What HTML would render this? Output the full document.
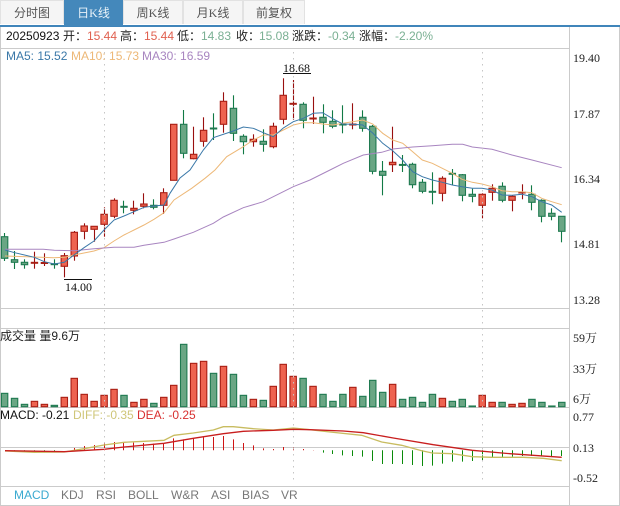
<!DOCTYPE html>
<html>
<head>
<meta charset="utf-8">
<style>
html,body{margin:0;padding:0;background:#fff}
#r{position:relative;width:620px;height:506px;overflow:hidden;font-family:"Liberation Sans","Noto Sans CJK SC",sans-serif;font-size:12px;background:#fff}
#r span,#r div.t{position:absolute;white-space:nowrap;line-height:14px}
.tab{position:absolute;top:0;height:24px;box-sizing:border-box;background:#f5f5f5;border:1px solid #e2e2e2;border-bottom:0;text-align:center;line-height:25px;font-size:12px;color:#555;font-family:"Liberation Serif","Noto Sans CJK SC",sans-serif}
.s{font-family:"Liberation Serif","Noto Serif CJK SC",serif;color:#222}
svg{position:absolute;left:0;top:0}
.g{color:#7ab093}.d{color:#e0604f}
</style>
</head>
<body>
<div id="r">
<svg id="c" width="620" height="506" viewBox="0 0 620 506">
<rect x="0" y="25" width="620" height="2" fill="#4085ba"/>
<g fill="none" stroke="#cbcbcb" stroke-width="1">
<path d="M.5 27V505.5H619.5V27M569.5 27V505.5M1 48.500H569M1 308.500H569M1 328.500H569M1 407.500H569M1 447.500H569M1 486.500H569"/>
</g>
<g id="k"></g>
<path d="M104.500 52V484M293.500 52V484M482.500 52V484" stroke="#c6c6c6" stroke-width="1" stroke-dasharray="1.500 4.500" fill="none"/>
<path d="M283 73.500H311M64 279.500H92" stroke="#111" stroke-width="1"/>
</svg>

<div class="tab" style="left:0;width:64px">分时图</div>
<div class="tab" style="left:64px;width:59px;height:26px;background:#4488bb;border-color:#4488bb;color:#e8f2f8">日K线</div>
<div class="tab" style="left:123px;width:60px">周K线</div>
<div class="tab" style="left:183px;width:60px">月K线</div>
<div class="tab" style="left:243px;width:62px">前复权</div>

<span style="left:6px;top:29px;color:#111">20250923</span>
<span style="left:63px;top:29px;color:#222">开：</span><span class="d" style="left:87px;top:29px">15.44</span>
<span style="left:120px;top:29px;color:#222">高：</span><span class="d" style="left:144px;top:29px">15.44</span>
<span style="left:177px;top:29px;color:#222">低：</span><span class="g" style="left:201px;top:29px">14.83</span>
<span style="left:236px;top:29px;color:#222">收：</span><span class="g" style="left:259px;top:29px">15.08</span>
<span style="left:292px;top:29px;color:#222">涨跌：</span><span class="g" style="left:328px;top:29px">-0.34</span>
<span style="left:359px;top:29px;color:#222">涨幅：</span><span class="g" style="left:395px;top:29px">-2.20%</span>

<span style="left:6px;top:49px;color:#3a78a8">MA5: 15.52</span>
<span style="left:71px;top:49px;color:#edb877">MA10: 15.73</span>
<span style="left:142px;top:49px;color:#a885c0">MA30: 16.59</span>

<span class="s" style="left:283px;top:61px;color:#111">18.68</span>
<span class="s" style="left:65px;top:280px;color:#111">14.00</span>

<span class="s" style="left:573px;top:51px">19.40</span>
<span class="s" style="left:573px;top:107px">17.87</span>
<span class="s" style="left:573px;top:172px">16.34</span>
<span class="s" style="left:573px;top:237px">14.81</span>
<span class="s" style="left:573px;top:293px">13.28</span>
<span class="s" style="left:573px;top:331px">59万</span>
<span class="s" style="left:573px;top:362px">33万</span>
<span class="s" style="left:573px;top:392px">6万</span>
<span class="s" style="left:573px;top:410px">0.77</span>
<span class="s" style="left:573px;top:441px">0.13</span>
<span class="s" style="left:573px;top:471px">-0.52</span>

<span style="left:0;top:329px;color:#222">成交量 量9.6万</span>
<span style="left:0;top:408px;color:#111">MACD: -0.21</span>
<span style="left:73px;top:408px;color:#cfc678">DIFF: -0.35</span>
<span style="left:137px;top:408px;color:#d83030">DEA: -0.25</span>

<span style="left:14px;top:488px;color:#3aa9d0">MACD</span>
<span style="left:61px;top:488px;color:#777">KDJ</span>
<span style="left:96px;top:488px;color:#777">RSI</span>
<span style="left:128px;top:488px;color:#777">BOLL</span>
<span style="left:171px;top:488px;color:#777">W&amp;R</span>
<span style="left:211px;top:488px;color:#777">ASI</span>
<span style="left:242px;top:488px;color:#777">BIAS</span>
<span style="left:281px;top:488px;color:#777">VR</span>
</div>
<script>
(function(){
var C=[
['g',236.7,258.3,233,261],['g',259.7,262.3,251,269],['g',262.3,264.7,259.3,268.7],['r',262.3,263.7,251.7,268.7],['r',262.5,263,253.3,266],
['g',263.7,264.7,259.3,268.7],['r',255.7,266.3,253,277.3],['r',232.3,256,231,260.7],['r',226,231.3,223.3,239.3],['r',226.3,229.3,226,241.7],
['r',214.3,224.3,207.3,236.7],['r',200.3,216.3,198.3,218.3],['g',206.3,207.7,200.7,213.3],['r',208.3,210.3,200.7,214.3],['r',204,206.3,193.3,208.3],
['g',205.3,207.3,199.3,209.3],['r',192.7,205.3,188.3,214],['r',124.3,180.3,124.3,180.3],['g',124.3,153.3,110,158.3],['r',154.3,158.7,126.7,159.3],
['r',130.3,141.3,117.3,146.7],['g',128,128.6,113.3,140],['r',101.3,124.3,92.3,132.7],['g',108.3,133.3,95.3,141],['g',136.3,141.7,134.3,154.3],
['r',139.3,141.7,134.3,146.7],['g',141.3,144.3,129.3,151.7],['r',126.3,146.7,122.7,148.3],['r',95.3,119.3,78.3,124.3],['r',103.3,104.7,80,120],
['g',104.3,120.3,102.3,128.3],['r',118,118.6,96.7,124],['g',117.3,122.3,104.3,133.3],['g',121.3,126.3,110.3,128.3],['g',124,125.3,105.3,133.3],
['r',124,125.3,103.3,129.3],['g',117.3,128.3,110.3,131.7],['g',126.3,171.3,125,174.3],['g',171.3,175.3,161,195.3],['r',162.3,164.7,126.7,172],
['g',164.4,165,155,172],['g',164.3,184.7,162.7,188.3],['g',182.3,191.3,179,193.3],['g',191.3,192.3,172.3,204.3],['r',178.3,193.3,176.3,201.3],
['g',173.3,174.3,169,185.3],['g',174.7,195.3,174,201.3],['g',194.3,196.3,188.7,202.3],['r',194.3,205.3,193.3,218.3],['r',188.3,192.3,184.3,200.7],
['g',186.3,200.3,182.3,202.3],['r',196.3,200.3,195.3,211.3],['r',192,192.6,184.3,199.3],['g',194.3,202.3,185.3,210.3],['g',200.3,216.3,199.3,222.3],
['g',213.3,216.3,208.3,220.3],['g',216.3,231.3,216.3,242.3]];
var V=[172,187,205,196,205,208,184,127,175,196,178,160,178,199,190,202,184,148,25,82,76,112,91,115,178,190,193,151,85,121,127,151,175,196,175,154,181,133,169,145,190,184,199,175,187,196,190,210,178,199,199,205,202,190,199,210,199];
var H=[null,344,345,346,345,346,null,336,330,327,323,318,318,320,321,323,322,307,310,307,304,303,300,310,321,328,337,339,333,335,339,342,350,354,358,360,362,375,384,384,384,387,390,389,383,377,377,375,372,365,364,362,360,360,360,360,360];
function cc(i){return 4.6+9.95*i}
function cx(i){return Math.floor(cc(i))+.5}
var s='';
for(var i=0;i<57;i++){var c=C[i],x=cx(i),m=cc(i),r=c[0]=='r';
 var w=r?'#990f0f':'#117a45',b=r?'#a81e14':'#1f7a50',f=r?'#ee6350':'#6aa684';
 s+='<path d="M'+x+' '+c[3]+'V'+c[4]+'" stroke="'+w+'" stroke-width="1.100"/>';
 var h=Math.max(c[2]-c[1],1);
 if(h<1.5){s+='<rect x="'+(m-3.7)+'" y="'+(c[1]-.5)+'" width="7.400" height="2" fill="'+b+'"/>'}
 else s+='<rect x="'+(m-3.2)+'" y="'+c[1]+'" width="6.400" height="'+h+'" fill="'+f+'" stroke="'+b+'" stroke-width="1.100"/>';
 var top=336+V[i]/3;
 s+='<rect x="'+(m-3.2)+'" y="'+top+'" width="6.400" height="'+(406.7-top)+'" fill="'+f+'" stroke="'+b+'" stroke-width="1.100"/>';
 if(H[i]!==null){var y=336+H[i]/3;s+='<path d="M'+x+' 450.300V'+y+'" stroke="'+(i<7||i>=32?'#0a8a0a':'#d01515')+'" stroke-width="1"/>';}
}
function pl(p,col,w){s+='<polyline fill="none" stroke="'+col+'" stroke-width="'+w+'" points="'+p+'"/>'}
pl('5,256 34,257 54,257.700 64.300,257.300 74,255 94,251 104,247.700 114,241 124,235 134,230 144,225 154,219.300 164,212.700 174,200 191.700,188.300 205,178.300 215,170 226.700,156.700 243.300,146.700 253.300,140 263.300,135 273.300,135 283.300,130 293.300,125 303.300,122.700 313.300,122.700 322.700,124 332.700,125 342.700,123.300 352.700,121.700 362.700,120 372.700,124 382.700,133.300 392.700,140 402.700,143.300 412.700,151.700 422.300,160 432.300,163.300 442.300,168.300 452.300,173.300 462,179.300 472.300,182.300 482,184 492,186.700 502,190.700 512,191.700 522,191.700 532,192.700 541.700,198.300 551.700,201.700 561.700,204.700','#edb877',1);
pl('5,249.300 43.300,249.300 54.300,250.300 74,250.700 94,248.700 114,247.300 134,247.300 144,245.300 164,242.300 174,239 193.300,232.300 213.300,223.300 223.300,217 243.300,207.700 263.300,201.700 283.300,191.700 293.300,186.700 310,180 330,170 343.300,163.300 363.300,155 381.700,152.300 392.700,149 412.700,147 432.300,145.700 452.300,144.300 462.700,144.300 472.300,147 492,149.300 512,155 532,160 561.700,167.700','#a885c0',1);
pl('5,250 14.700,252.700 34.300,257.300 44.300,261.700 54.300,264 64.300,262.300 74,255 84,247.700 94,241 104,230 114,220 124,216 134,211.700 144,207.300 154,206 164,205 170,193.300 180,178 190,170 203.300,150 213.300,137.700 233.300,131 243.300,127 253.300,128.300 263.300,132.700 273.300,136.700 283.300,128 293.300,121.700 303.300,118.300 313.300,113.300 322.700,112.700 332.700,118.700 342.700,124 352.700,124.300 362.700,125 372.700,133 382.700,143.300 392.700,150.700 402.700,160 412.700,171.700 422.300,176.700 432.300,180 442.300,182.300 452.300,185 462,186.700 472.300,188.300 482,188.300 492,190 502,195 512,195.300 522,194.300 532,196.700 541.700,201.700 551.700,205 561.700,212.300','#3a78a8',1);
pl('5,451 34.300,452.300 64.300,452 84,448.700 104,445 124,442.300 144,441.300 164,440.300 174,435.300 193.300,433 213.300,430 223.300,426.700 233.300,426.700 253.300,428.700 273.300,430 293.300,428 310,429.700 330,432 361.700,435.300 381.700,442 401.700,445.300 421.700,450.700 432.300,453 452.300,453.700 472.300,456.700 492,457.300 523.300,457.300 543.300,458.300 561.700,460.700','#c8bc60',1.3);
pl('5,450.700 64.300,451.700 104,449.300 124,447 164,443.300 193.300,438.300 223.300,433.700 243.300,431.300 273.300,430.300 293.300,429.300 310,429.700 343.300,431 363.300,432.700 393.300,438 433.300,444.700 472.300,450.300 510,453.700 561.700,457.300','#c81e1e',1.3);
document.getElementById('k').innerHTML=s;
})();
</script>
</body>
</html>
